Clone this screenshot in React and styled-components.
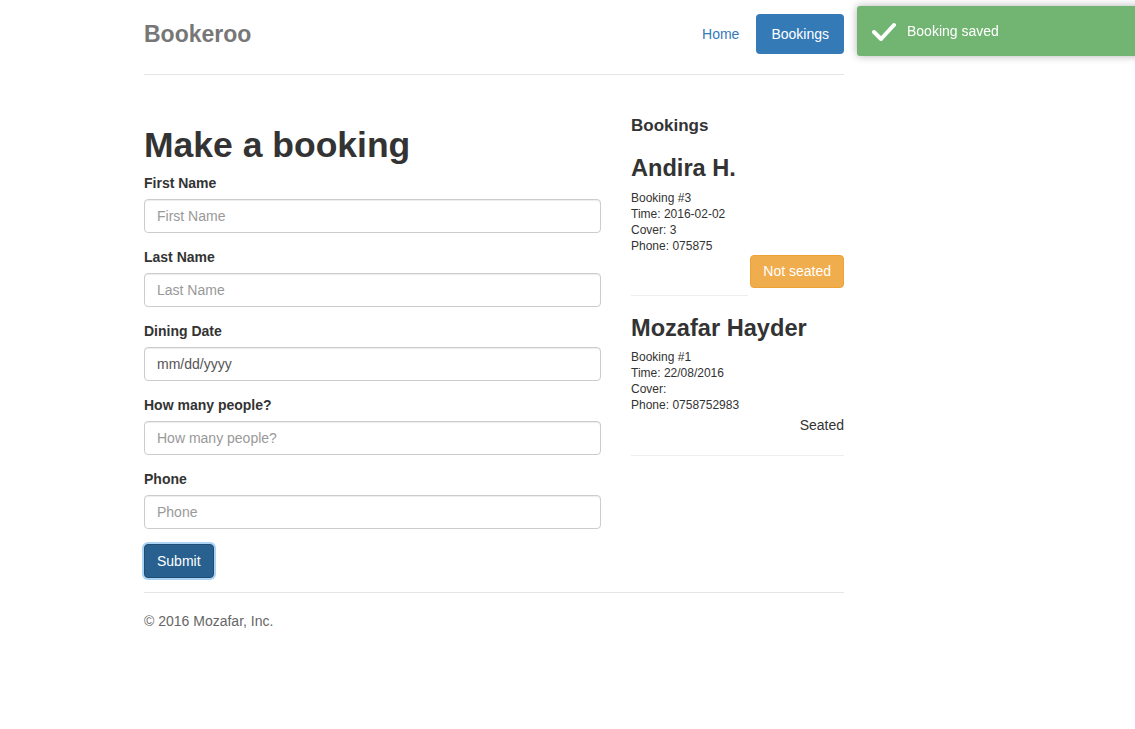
import React from "react";
import styled, { createGlobalStyle } from "styled-components";

const GlobalStyle = createGlobalStyle`
  * { box-sizing: border-box; }
  body {
    margin: 0;
    background: #fff;
    font-family: "Liberation Sans", Arial, sans-serif;
    font-size: 14px;
    line-height: 1.42857;
    color: #333;
  }
`;

const Container = styled.div`
  width: 700px;
  margin-left: 144px;
`;

const Header = styled.header`
  display: flex;
  align-items: center;
  justify-content: space-between;
  padding: 14px 0 20px;
  border-bottom: 1px solid #e5e5e5;
`;

const Brand = styled.h3`
  margin: 0;
  font-size: 23px;
  font-weight: bold;
  line-height: 40px;
  color: #777;
`;

const Nav = styled.nav`
  display: flex;
  gap: 2px;
`;

const Pill = styled.a`
  display: block;
  padding: 10px 15px;
  border-radius: 4px;
  line-height: 20px;
  text-decoration: none;
  color: ${(p) => (p.$active ? "#fff" : "#337ab7")};
  background: ${(p) => (p.$active ? "#337ab7" : "transparent")};
`;

const Main = styled.main`
  display: grid;
  grid-template-columns: 457px 213px;
  column-gap: 30px;
  padding: 29px 0 14px;
`;

const Title = styled.h1`
  margin: 22px 0 9px;
  font-size: 35.5px;
  font-weight: bold;
  line-height: 1.1;
`;

const FormGroup = styled.div`
  margin-bottom: 15px;
`;

const Label = styled.label`
  display: block;
  margin-bottom: 5px;
  font-weight: bold;
`;

const Input = styled.input`
  display: block;
  width: 100%;
  height: 34px;
  padding: 6px 12px;
  font-family: inherit;
  font-size: 14px;
  color: #555;
  border: 1px solid #ccc;
  border-radius: 4px;
  box-shadow: inset 0 1px 1px rgba(0, 0, 0, 0.075);
  outline: none;
  &::placeholder { color: #999; }
`;

const SubmitButton = styled.button`
  display: block;
  height: 34px;
  padding: 6px 12px;
  font-family: inherit;
  font-size: 14px;
  color: #fff;
  background: #286090;
  border: 1px solid #204d74;
  border-radius: 4px;
  box-shadow: 0 0 0 2px rgba(102, 175, 233, 0.55);
`;

const SideTitle = styled.h4`
  margin: 12px 0 0;
  font-size: 17px;
  font-weight: bold;
  line-height: 1.15;
`;

const GuestName = styled.h3`
  margin: 20px 0 8px;
  font-size: 23.6px;
  font-weight: bold;
  line-height: 1.1;
`;

const Detail = styled.div`
  font-size: 12px;
  line-height: 16px;
`;

const StatusRow = styled.div`
  display: flex;
  justify-content: flex-end;
  margin-top: 1px;
`;

const StatusButton = styled.button`
  height: 33px;
  padding: 6px 12px;
  font-family: inherit;
  font-size: 14px;
  color: #fff;
  background: #f0ad4e;
  border: 1px solid #eea236;
  border-radius: 4px;
`;

const StatusText = styled.div`
  margin-top: 3px;
  text-align: right;
`;

const Rule = styled.hr`
  margin: ${(p) => (p.$short ? "7px 96px 20px 0" : "19px 0")};
  border: 0;
  border-top: 1px solid #eee;
`;

const Footer = styled.footer`
  padding-top: 19px;
  border-top: 1px solid #e5e5e5;
  color: #666;
`;

const Toast = styled.div`
  position: fixed;
  top: 6px;
  left: 857px;
  width: 300px;
  height: 50px;
  display: flex;
  align-items: center;
  gap: 11px;
  padding: 2px 0 0 15px;
  background: #72b572;
  color: #fff;
  border-radius: 3px;
  box-shadow: 0 0 8px rgba(0, 0, 0, 0.3);
`;

const fields = [
  { label: "First Name", placeholder: "First Name" },
  { label: "Last Name", placeholder: "Last Name" },
  { label: "Dining Date", value: "mm/dd/yyyy" },
  { label: "How many people?", placeholder: "How many people?" },
  { label: "Phone", placeholder: "Phone" },
];

const bookings = [
  { name: "Andira H.", id: 3, time: "2016-02-02", cover: "3", phone: "075875", seated: false },
  { name: "Mozafar Hayder", id: 1, time: "22/08/2016", cover: "", phone: "0758752983", seated: true },
];

function CheckIcon() {
  return (
    <svg width="24" height="20" viewBox="0 0 24 20">
      <polyline
        points="2,10 9,17 22,3"
        fill="none"
        stroke="#fff"
        strokeWidth="4"
        strokeLinecap="round"
        strokeLinejoin="round"
      />
    </svg>
  );
}

export default function App() {
  return (
    <>
      <GlobalStyle />
      <Container>
        <Header>
          <Brand>Bookeroo</Brand>
          <Nav>
            <Pill href="#">Home</Pill>
            <Pill href="#" $active>Bookings</Pill>
          </Nav>
        </Header>
        <Main>
          <section>
            <Title>Make a booking</Title>
            <form onSubmit={(e) => e.preventDefault()}>
              {fields.map((f) => (
                <FormGroup key={f.label}>
                  <Label>{f.label}</Label>
                  {f.value ? (
                    <Input type="text" defaultValue={f.value} />
                  ) : (
                    <Input type="text" placeholder={f.placeholder} />
                  )}
                </FormGroup>
              ))}
              <SubmitButton type="submit">Submit</SubmitButton>
            </form>
          </section>
          <aside>
            <SideTitle>Bookings</SideTitle>
            {bookings.map((b) => (
              <div key={b.id}>
                <GuestName>{b.name}</GuestName>
                <Detail>Booking #{b.id}</Detail>
                <Detail>Time: {b.time}</Detail>
                <Detail>Cover: {b.cover}</Detail>
                <Detail>Phone: {b.phone}</Detail>
                {b.seated ? (
                  <StatusText>Seated</StatusText>
                ) : (
                  <StatusRow>
                    <StatusButton>Not seated</StatusButton>
                  </StatusRow>
                )}
                <Rule $short={!b.seated} />
              </div>
            ))}
          </aside>
        </Main>
        <Footer>© 2016 Mozafar, Inc.</Footer>
      </Container>
      <Toast>
        <CheckIcon />
        <span>Booking saved</span>
      </Toast>
    </>
  );
}
